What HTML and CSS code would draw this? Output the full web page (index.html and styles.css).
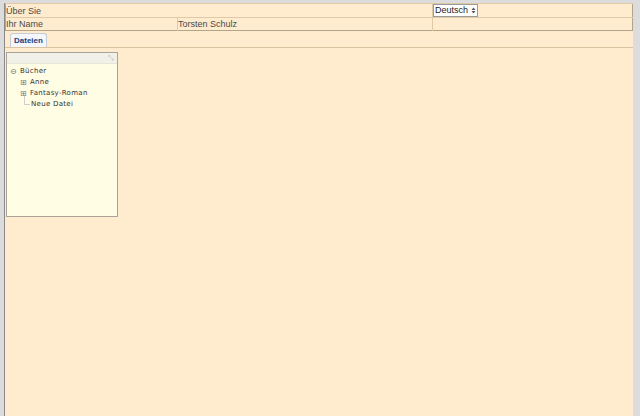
FILE: index.html
```html
<!DOCTYPE html>
<html>
<head>
<meta charset="utf-8">
<link rel="stylesheet" href="styles.css">
</head>
<body>
<div class="page">
  <table class="info">
    <tr>
      <td class="c1" colspan="2">Über Sie</td>
      <td class="c3"><span class="lang"><select class="lang-sel"><option>Deutsch</option></select><svg class="lang-arrow" width="5" height="7" viewBox="0 0 5 7"><path d="M0.5 3 L2.5 0.5 L4.5 3 Z M0.5 4 L2.5 6.5 L4.5 4 Z" fill="#555"/></svg></span></td>
    </tr>
    <tr>
      <td class="c1">Ihr Name</td>
      <td class="c2">Torsten Schulz</td>
      <td class="c3"></td>
    </tr>
  </table>
  <div class="tabbar">
    <div class="tab">Dateien</div>
  </div>
  <div class="panel">
    <div class="panel-head"><span class="resize">⤡</span></div>
    <ul class="tree">
      <li class="node root"><span class="tog">⊖</span>Bücher</li>
      <li class="node lvl2"><span class="tog">⊞</span>Anne</li>
      <li class="node lvl2"><span class="tog">⊞</span>Fantasy-Roman</li>
      <li class="node lvl2 leaf"><span class="elbow"></span>Neue Datei</li>
    </ul>
  </div>
</div>
</body>
</html>
```

FILE: styles.css
```css
html, body {
  margin: 0;
  padding: 0;
  height: 100%;
}
body {
  background: #dcdcdc;
  font-family: "Liberation Sans", Arial, sans-serif;
  overflow: hidden;
}
.page {
  margin: 3px 7px 0 4px;
  height: calc(100% - 3px);
  background: #ffebcd;
  border-left: 1px solid #8a8a8a;
  box-sizing: border-box;
}
.info {
  width: 100%;
  border-collapse: collapse;
  border: 1px solid #b3a58a;
  font-size: 9px;
  color: #4a4a4a;
}
.info td {
  height: 12px;
  padding: 0;
  border-top: 1px solid #e0c9a6;
  line-height: 12px;
}
.info .c1 { width: 171px; }
.info .c2 { width: 254px; border-left: 1px solid #e0c9a6; }
.info .c3 { border-left: 1px solid #e0c9a6; }
.lang {
  display: inline-flex;
  align-items: center;
  height: 11px;
  border: 1px solid #9a9a9a;
  background: #fff;
  padding-right: 1px;
  vertical-align: top;
}
.lang-sel {
  appearance: none;
  -webkit-appearance: none;
  font-family: "Liberation Sans", Arial, sans-serif;
  font-size: 9px;
  line-height: 11px;
  height: 11px;
  padding: 0 2px 0 1px;
  margin: 0;
  border: none;
  background: transparent;
  color: #222;
}
.lang-arrow { display: block; }
.tabbar {
  height: 14px;
  padding: 2px 0 0 5px;
  border-bottom: 1px solid #d9c3a0;
  display: flex;
}
.tab {
  background: #f4f6fa;
  border: 1px solid #c5cbd5;
  border-bottom: none;
  border-radius: 3px 3px 0 0;
  font-family: "Liberation Sans", Arial, sans-serif;
  font-weight: bold;
  font-size: 8px;
  color: #20427a;
  padding: 1px 3px 0;
  line-height: 12px;
}
.panel {
  margin: 4px 0 0 1px;
  width: 112px;
  height: 165px;
  background: #fffde4;
  border: 1px solid #a9a398;
  box-sizing: border-box;
}
.panel-head {
  height: 10px;
  background: #f2f1e9;
  border-bottom: 1px solid #e8e6d8;
  display: flex;
  justify-content: flex-end;
}
.resize {
  font-size: 7px;
  color: #b0b0b0;
  line-height: 10px;
  padding-right: 3px;
}
.tree {
  list-style: none;
  margin: 2px 0 0 0;
  padding: 0;
  font-family: "DejaVu Sans", sans-serif;
  font-size: 7px;
  letter-spacing: 0.3px;
  color: #333;
}
.node {
  height: 11px;
  line-height: 11px;
  display: flex;
  align-items: center;
}
.root { padding-left: 3px; }
.lvl2 { padding-left: 13px; }
.tog {
  width: 10px;
  font-size: 8px;
  color: #777;
}
.elbow {
  width: 5px;
  height: 8px;
  margin: -8px 1px 0 4px;
  border-left: 1px solid #cfcfcf;
  border-bottom: 1px solid #cfcfcf;
}
```
